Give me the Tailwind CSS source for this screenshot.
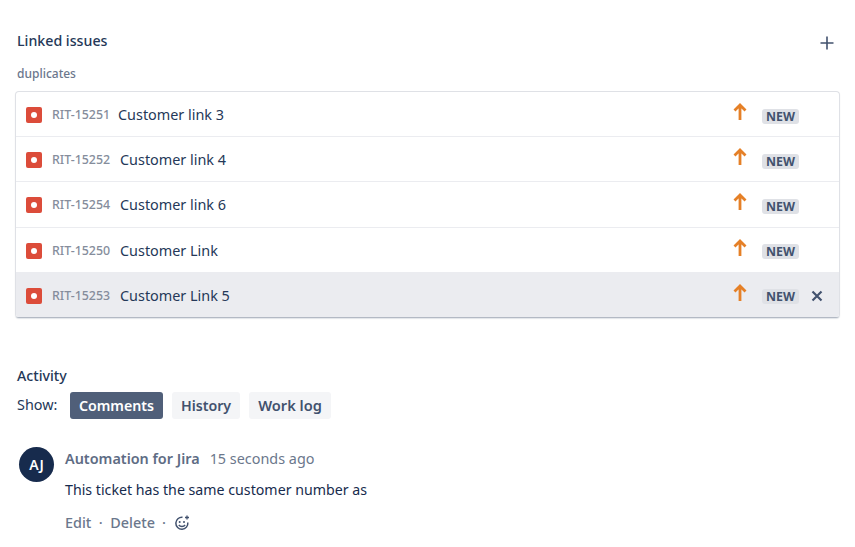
<!doctype html>
<html>
<head>
<meta charset="utf-8">
<script src="https://cdn.jsdelivr.net/npm/@tailwindcss/browser@4"></script>
</head>
<body class="bg-white">
<div class="w-[855px] h-[547px] overflow-hidden font-['Noto_Sans',sans-serif] text-[#172b4d] pl-[15px] pr-[16px]">
  <div class="flex justify-between h-[62px] pt-[31px] pl-[2px]">
    <h2 class="text-[14.2px] leading-[20px] font-medium text-[#253858]">Linked issues</h2>
    <svg class="mt-[5px] mr-[5px]" width="14" height="14" viewBox="0 0 14 14"><path d="M7 0.500v13M0.500 7h13" stroke="#42526e" stroke-width="1.600" fill="none"/></svg>
  </div>
  <div class="h-[29px] pt-[4px] pl-[2px] text-[12px] leading-[16px] font-medium text-[#6b778c]">duplicates</div>
  <div class="w-[825px] h-[227px] rounded-[4px] border border-[#dfe1e6] border-b-[#b3b9c4] shadow-[0_1px_1px_rgba(9,30,66,0.12)] overflow-hidden flex flex-col">

    <div class="h-[45px] flex items-center border-b border-[#ebecf0] pl-[10px] pt-[2px]">
      <svg width="16" height="16" viewBox="0 0 16 16"><rect width="16" height="16" rx="2" fill="#dc4c3a"/><circle cx="8" cy="8" r="3" fill="#fff"/></svg>
      <span class="ml-[10px] mt-[1px] w-[57px] text-[12.4px] font-medium text-[#858d9c] whitespace-nowrap">RIT-15251</span>
      <span class="ml-[9px] text-[14.4px] text-[#253858] whitespace-nowrap">Customer link 3</span>
      <svg class="ml-auto mr-[15px] -mt-[6px]" width="14" height="18" viewBox="0 0 14 18"><path d="M7 17V2M1.500 7.500L7 2l5.500 5.500" stroke="#e58027" stroke-width="2.800" fill="none"/></svg>
      <span class="mt-[3px] mr-[40px] w-[37px] h-[15px] rounded-[3px] bg-[#dfe1e6] text-[12.4px] leading-[15px] font-bold text-[#42526e] text-center">NEW</span>
    </div>

    <div class="h-[45px] flex items-center border-b border-[#ebecf0] pl-[10px] pt-[2px]">
      <svg width="16" height="16" viewBox="0 0 16 16"><rect width="16" height="16" rx="2" fill="#dc4c3a"/><circle cx="8" cy="8" r="3" fill="#fff"/></svg>
      <span class="ml-[10px] mt-[1px] w-[59px] text-[12.4px] font-medium text-[#858d9c] whitespace-nowrap">RIT-15252</span>
      <span class="ml-[9px] text-[14.4px] text-[#253858] whitespace-nowrap">Customer link 4</span>
      <svg class="ml-auto mr-[15px] -mt-[6px]" width="14" height="18" viewBox="0 0 14 18"><path d="M7 17V2M1.500 7.500L7 2l5.500 5.500" stroke="#e58027" stroke-width="2.800" fill="none"/></svg>
      <span class="mt-[3px] mr-[40px] w-[37px] h-[15px] rounded-[3px] bg-[#dfe1e6] text-[12.4px] leading-[15px] font-bold text-[#42526e] text-center">NEW</span>
    </div>

    <div class="h-[46px] flex items-center border-b border-[#ebecf0] pl-[10px]">
      <svg width="16" height="16" viewBox="0 0 16 16"><rect width="16" height="16" rx="2" fill="#dc4c3a"/><circle cx="8" cy="8" r="3" fill="#fff"/></svg>
      <span class="ml-[10px] mt-[1px] w-[59px] text-[12.4px] font-medium text-[#858d9c] whitespace-nowrap">RIT-15254</span>
      <span class="ml-[9px] text-[14.4px] text-[#253858] whitespace-nowrap">Customer link 6</span>
      <svg class="ml-auto mr-[15px] -mt-[6px]" width="14" height="18" viewBox="0 0 14 18"><path d="M7 17V2M1.500 7.500L7 2l5.500 5.500" stroke="#e58027" stroke-width="2.800" fill="none"/></svg>
      <span class="mt-[3px] mr-[40px] w-[37px] h-[15px] rounded-[3px] bg-[#dfe1e6] text-[12.4px] leading-[15px] font-bold text-[#42526e] text-center">NEW</span>
    </div>

    <div class="h-[45px] flex items-center border-b border-[#ebecf0] pl-[10px] pt-[2px]">
      <svg width="16" height="16" viewBox="0 0 16 16"><rect width="16" height="16" rx="2" fill="#dc4c3a"/><circle cx="8" cy="8" r="3" fill="#fff"/></svg>
      <span class="ml-[10px] mt-[1px] w-[59px] text-[12.4px] font-medium text-[#858d9c] whitespace-nowrap">RIT-15250</span>
      <span class="ml-[9px] text-[14.4px] text-[#253858] whitespace-nowrap">Customer Link</span>
      <svg class="ml-auto mr-[15px] -mt-[6px]" width="14" height="18" viewBox="0 0 14 18"><path d="M7 17V2M1.500 7.500L7 2l5.500 5.500" stroke="#e58027" stroke-width="2.800" fill="none"/></svg>
      <span class="mt-[1px] mr-[40px] w-[37px] h-[15px] rounded-[3px] bg-[#dfe1e6] text-[12.4px] leading-[15px] font-bold text-[#42526e] text-center">NEW</span>
    </div>

    <div class="flex-1 flex items-center bg-[#ebecf0] pl-[10px] pt-[2px]">
      <svg width="16" height="16" viewBox="0 0 16 16"><rect width="16" height="16" rx="2" fill="#dc4c3a"/><circle cx="8" cy="8" r="3" fill="#fff"/></svg>
      <span class="ml-[10px] mt-[1px] w-[59px] text-[12.4px] font-medium text-[#858d9c] whitespace-nowrap">RIT-15253</span>
      <span class="ml-[9px] text-[14.4px] text-[#253858] whitespace-nowrap">Customer Link 5</span>
      <svg class="ml-auto mr-[15px] -mt-[6px]" width="14" height="18" viewBox="0 0 14 18"><path d="M7 17V2M1.500 7.500L7 2l5.500 5.500" stroke="#e58027" stroke-width="2.800" fill="none"/></svg>
      <span class="mt-[1px] mr-[12px] w-[37px] h-[15px] rounded-[3px] bg-[#dfe1e6] text-[12.4px] leading-[15px] font-bold text-[#42526e] text-center">NEW</span>
      <svg class="mr-[16px]" width="12" height="12" viewBox="0 0 12 12"><path d="M1.500 1.500l9 9M10.500 1.500l-9 9" stroke="#42526e" stroke-width="2.200" fill="none"/></svg>
    </div>
  </div>

  <h2 class="mt-[48px] pl-[2px] text-[14.2px] leading-[20px] font-medium text-[#253858]">Activity</h2>
  <div class="flex items-center h-[27px] mt-[6px] pl-[2px]">
    <span class="w-[53px] -mt-[2px] text-[14.4px] text-[#253858]">Show:</span>
    <span class="w-[93px] text-center h-[27px] rounded-[3px] bg-[#505f79] text-white text-[14.2px] leading-[27px] font-semibold">Comments</span>
    <span class="ml-[9px] w-[68px] text-center h-[27px] rounded-[3px] bg-[#f4f5f7] text-[#42526e] text-[14.2px] leading-[27px] font-semibold">History</span>
    <span class="ml-[9px] w-[82px] text-center h-[27px] rounded-[3px] bg-[#f4f5f7] text-[#42526e] text-[14.6px] leading-[27px] font-semibold">Work log</span>
  </div>
  <div class="flex mt-[28px] pl-[1px]">
    <div class="ml-[3px] w-[35px] h-[35px] rounded-full bg-[#172b4d] text-white text-[14px] font-semibold flex items-center justify-center">AJ</div>
    <div class="ml-[11px] mt-[2px]">
      <div class="flex text-[14.4px] leading-[20px]">
        <span class="font-semibold text-[#5e6c84]">Automation for Jira</span>
        <span class="ml-[10px] text-[14.4px] text-[#6b778c]">15 seconds ago</span>
      </div>
      <p class="mt-[11px] text-[14.2px] leading-[20px] text-[#172b4d]">This ticket has the same customer number as</p>
      <div class="mt-[13px] flex items-center text-[14.4px] leading-[20px] font-medium text-[#6b778c]">
        <span>Edit</span><span class="mx-[7.5px]">·</span><span>Delete</span><span class="mx-[7px]">·</span>
        <svg class="ml-[1px]" width="16" height="16" viewBox="0 0 16 16" fill="none"><path d="M8.500 2.300A6 6 0 1 0 13.800 7.500" stroke="#42526e" stroke-width="1.500"/><circle cx="5.700" cy="7" r="1" fill="#42526e"/><circle cx="10" cy="7" r="1" fill="#42526e"/><path d="M4.800 10c1.600 2 4.800 2 6.300 0" stroke="#42526e" stroke-width="1.500"/><path d="M13 0.500v4M11 2.500h4" stroke="#42526e" stroke-width="1.300"/></svg>
      </div>
    </div>
  </div>
</div>
</body>
</html>
